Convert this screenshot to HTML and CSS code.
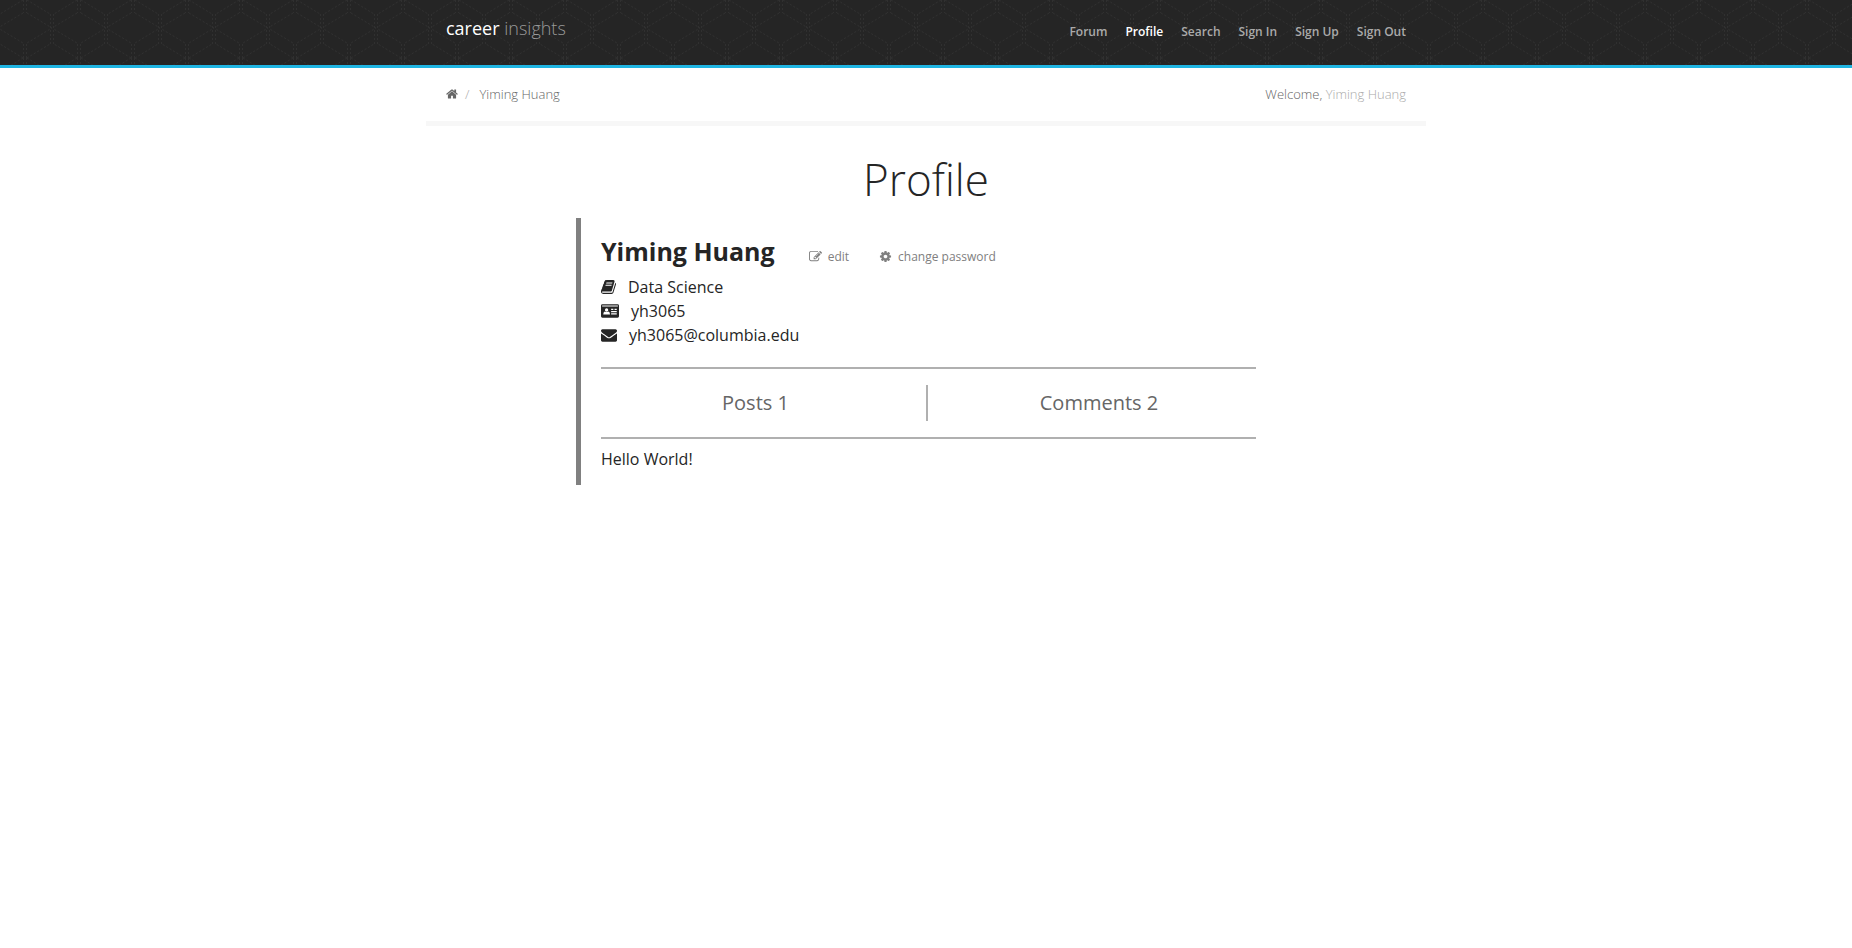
FILE: index.html
```html
<!DOCTYPE html>
<html lang="en">
<head>
<meta charset="utf-8">
<title>Career Insights - Profile</title>
<link rel="stylesheet" href="styles.css">
</head>
<body>
<header class="site-header">
  <svg class="header-pattern" aria-hidden="true">
    <defs>
      <pattern id="hex" width="54" height="58" patternUnits="userSpaceOnUse">
        <g fill="none" stroke="#303030" stroke-width="1" stroke-dasharray="2 2">
          <path d="M23.5 0V13M26.5 0V13M23.5 44V58M26.5 44V58M50.500 14V44M53.5 14V44"/>
          <path d="M27 0L50 14M27 13L52 28L27 43M27 58L50 44"/>
          <path d="M23 0L0 14M23 13L-2 28L23 43M23 58L0 44"/>
        </g>
      </pattern>
    </defs>
    <rect width="100%" height="100%" fill="url(#hex)"/>
  </svg>
  <div class="container header-row">
    <a class="logo" href="#">career <span class="logo-light">insights</span></a>
    <nav class="main-nav">
      <a href="#">Forum</a>
      <a class="active" href="#">Profile</a>
      <a href="#">Search</a>
      <a href="#">Sign In</a>
      <a href="#">Sign Up</a>
      <a href="#">Sign Out</a>
    </nav>
  </div>
</header>

<div class="container crumb-row">
  <nav class="breadcrumb" aria-label="Breadcrumb">
    <a class="home" href="#" aria-label="Home"><svg class="icon-home" viewBox="64 192 1664 1408"><path d="M1472 992v480q0 26-19 45t-45 19h-384v-384h-256v384h-384q-26 0-45-19t-19-45v-480q0-1 .5-3t.5-3l575-474 575 474q1 2 1 6zm223-69l-62 74q-8 9-21 11h-3q-13 0-21-7l-692-577-692 577q-12 8-24 7-13-2-21-11l-62-74q-8-10-7-23.500t11-21.500l719-599q32-26 76-26t76 26l244 204v-195q0-14 9-23t23-9h192q14 0 23 9t9 23v408l219 182q10 8 11 21.500t-7 23.500z"/></svg></a>
    <span class="slash">/</span>
    <span>Yiming Huang</span>
  </nav>
  <p class="welcome">Welcome, <a href="#">Yiming Huang</a></p>
</div>

<main class="profile">
  <h1>Profile</h1>
  <section class="card">
    <div class="name-row">
      <h2>Yiming Huang</h2>
      <a class="action" href="#"><svg class="icon-action" viewBox="0 0 1792 1792"><path d="M888 1184l116-116-152-152-116 116v56h96v96h56zm440-720q-16-16-33 1l-350 350q-17 17-1 33t33-1l350-350q17-17 1-33zm80 594v190q0 119-84.500 203.500t-203.500 84.500h-832q-119 0-203.500-84.500t-84.500-203.500v-832q0-119 84.500-203.500t203.500-84.500h832q63 0 117 25 15 7 18 23 3 17-9 29l-49 49q-14 14-32 8-23-6-45-6h-832q-66 0-113 47t-47 113v832q0 66 47 113t113 47h832q66 0 113-47t47-113v-126q0-13 9-22l64-64q15-15 35-7t20 29zm-96-738l288 288-672 672h-288v-288zm444 132l-92 92-288-288 92-92q28-28 68-28t68 28l152 152q28 28 28 68t-28 68z"/></svg>edit</a>
      <a class="action" href="#"><svg class="icon-action" viewBox="0 0 1792 1792"><path d="M1152 896q0-106-75-181t-181-75-181 75-75 181 75 181 181 75 181-75 75-181zm512-109v222q0 12-8 23t-20 13l-185 28q-19 54-39 91 35 50 107 138 10 12 10 25t-9 23q-27 37-99 108t-94 71q-12 0-26-9l-138-108q-44 23-91 38-16 136-29 186-7 28-36 28h-222q-14 0-24.500-8.500t-11.500-21.500l-28-184q-49-16-90-37l-141 107q-10 9-25 9-14 0-25-11-126-114-165-168-7-10-7-23 0-12 8-23 15-21 51-66.500t54-70.500q-27-50-41-99l-183-27q-13-2-21-12.500t-8-23.500v-222q0-12 8-23t19-13l186-28q14-46 39-92-40-57-107-138-10-12-10-24 0-10 9-23 26-36 98.500-107.500t94.500-71.500q13 0 26 10l138 107q44-23 91-38 16-136 29-186 7-28 36-28h222q14 0 24.500 8.500t11.500 21.500l28 184q49 16 90 37l142-107q9-9 24-9 13 0 25 10 129 119 165 170 7 8 7 22 0 12-8 23-15 21-51 66.500t-54 70.500q26 50 41 98l183 28q13 2 21 12.500t8 23.500z"/></svg>change password</a>
    </div>
    <ul class="details">
      <li><svg class="icon-book" viewBox="64 128 1664 1536"><path d="M1703 478q40 57 18 129l-275 906q-19 64-76.500 107.500t-122.500 43.500h-923q-77 0-148.500-53.500t-99.500-131.500q-24-67-2-127 0-4 3-27t4-37q1-8-3-21.500t-3-19.500q2-11 8-21t16.500-23.500 16.500-23.500q23-38 45-91.500t30-91.500q3-10 .5-30t-.5-28q3-11 17-28t17-23q21-36 42-92t25-90q1-9-2.500-32t.5-28q4-13 22-30.500t22-22.500q19-26 42.500-84.500t27.500-96.500q1-8-3-25.500t-2-26.500q2-8 9-18t18-23 17-21q8-12 16.500-30.500t15-35 16-36 19.500-32 26.500-23.500 36-11.500 47.500 5.500l-1 3q38-9 51-9h761q74 0 114 56t18 130l-274 906q-36 119-71.500 153.500t-128.500 34.500h-869q-27 0-38 15-11 16-1 43 24 70 144 70h923q29 0 56-15.500t35-41.500l300-987q7-22 5-57 38 15 59 43zm-1064 2q-4 13 2 22.500t20 9.500h608q13 0 25.500-9.500t16.500-22.500l21-64q4-13-2-22.500t-20-9.500h-608q-13 0-25.500 9.500t-16.500 22.500zm-83 256q-4 13 2 22.500t20 9.500h608q13 0 25.500-9.500t16.500-22.500l21-64q4-13-2-22.500t-20-9.500h-608q-13 0-25.500 9.500t-16.500 22.500z"/></svg>Data Science</li>
      <li><svg class="icon-card" viewBox="0 0 2048 1536"><path fill-rule="evenodd" d="M160 0H1888Q2048 0 2048 160V1376Q2048 1536 1888 1536H160Q0 1536 0 1376V160Q0 0 160 0ZM128 128V256H1920V128ZM256 1152H1024Q1024 900 850 820Q790 890 640 890Q490 890 430 820Q256 900 256 1152ZM640 448A190 200 0 1 0 640 848A190 200 0 1 0 640 448ZM1152 512V640H1408V512ZM1536 512V640H1792V512ZM1152 768V896H1792V768ZM1152 1024V1152H1792V1024Z"/></svg>yh3065</li>
      <li><svg class="icon-mail" viewBox="0 256 1792 1408"><path d="M1792 710v794q0 66-47 113t-113 47h-1472q-66 0-113-47t-47-113v-794q44 49 101 87 362 246 497 345 57 42 92.500 65.500t94.500 48 110 24.500h2q51 0 110-24.500t94.500-48 92.500-65.500q170-123 498-345 57-39 100-87zm0-294q0 79-49 151t-122 123q-376 261-468 325-10 7-42.500 31t-54 38.500-52 32.500-57.500 27-50 9h-2q-23 0-50-9t-57.500-27-52-32.500-54-38.500-42.500-31q-91-64-262-182.500t-205-142.500q-62-42-117-115.500t-55-136.500q0-78 41.500-130t118.500-52h1472q65 0 112.500 47t47.500 113z"/></svg>yh3065@columbia.edu</li>
    </ul>
    <div class="stats">
      <a href="#">Posts 1</a>
      <a href="#">Comments 2</a>
    </div>
    <p class="bio">Hello World!</p>
  </section>
</main>
</body>
</html>
```

FILE: styles.css
```css
* {
  box-sizing: border-box;
}

body {
  margin: 0;
  background: #fff;
  color: #252525;
  font: 16px/24px "Open Sans", sans-serif;
}

a {
  color: inherit;
  text-decoration: none;
}

h1, h2, p, ul {
  margin: 0;
  padding: 0;
}

svg {
  fill: currentColor;
  flex: none;
}

.container {
  max-width: 1000px;
  margin: 0 auto;
  padding: 0 20px;
  display: flex;
  justify-content: space-between;
}

.site-header {
  position: relative;
  background: #252525;
  border-bottom: 3px solid #1fb5e2;
}

.header-pattern {
  position: absolute;
  inset: 0;
  width: 100%;
  height: 100%;
}

.header-row {
  position: relative;
  padding-top: 16px;
  padding-bottom: 21px;
}

.logo {
  color: #fff;
  font-size: 18px;
}

.logo-light {
  color: #999;
  font-weight: 300;
}

.main-nav {
  display: flex;
  gap: 18px;
  padding-top: 4px;
  color: #aaa;
  font-size: 12px;
  font-weight: 600;
}

.main-nav .active {
  color: #fff;
}

.crumb-row {
  padding-top: 14px;
  padding-bottom: 15px;
  border-bottom: 5px solid #f7f7f7;
  color: #666;
  font-size: 13px;
  font-weight: 300;
}

.breadcrumb {
  display: flex;
}

.home {
  display: flex;
  align-items: center;
}

.icon-home {
  width: 12px;
  height: 10px;
}

.slash {
  margin: 0 10px 0 7px;
  color: #aaa;
}

.welcome a {
  color: #aaa;
}

.profile {
  max-width: 700px;
  margin: 0 auto;
}

h1 {
  padding: 23px 0 9px;
  text-align: center;
  font-size: 44px;
  line-height: 60px;
  font-weight: 300;
}

.card {
  padding: 15px 20px 14px;
  border-left: 5px solid #808080;
}

.name-row {
  display: flex;
  align-items: baseline;
}

h2 {
  margin-right: 4px;
  font-size: 25px;
  line-height: 36px;
  font-weight: 700;
}

.action {
  margin-left: 30px;
  color: #808080;
  font-size: 12px;
}

.icon-action {
  width: 13px;
  height: 13px;
  margin-right: 6px;
  vertical-align: -2px;
}

.details {
  list-style: none;
  padding: 6px 0 20px;
}

.details li {
  display: flex;
  align-items: center;
}

.details svg {
  margin-right: 12px;
}

.icon-book {
  width: 15px;
  height: 14px;
}

.icon-card {
  width: 18px;
  height: 14px;
}

.icon-mail {
  width: 16px;
  height: 13px;
}

.stats {
  display: grid;
  grid-template-columns: 325fr 330fr;
  padding: 16px 0;
  border-top: 2px solid #b0b0b0;
  border-bottom: 2px solid #b0b0b0;
}

.stats a {
  padding-right: 16px;
  color: #666;
  font-size: 20px;
  line-height: 36px;
  text-align: center;
}

.stats a + a {
  padding: 0 0 0 14px;
  border-left: 2px solid #b0b0b0;
}

.bio {
  padding-top: 8px;
}
```
